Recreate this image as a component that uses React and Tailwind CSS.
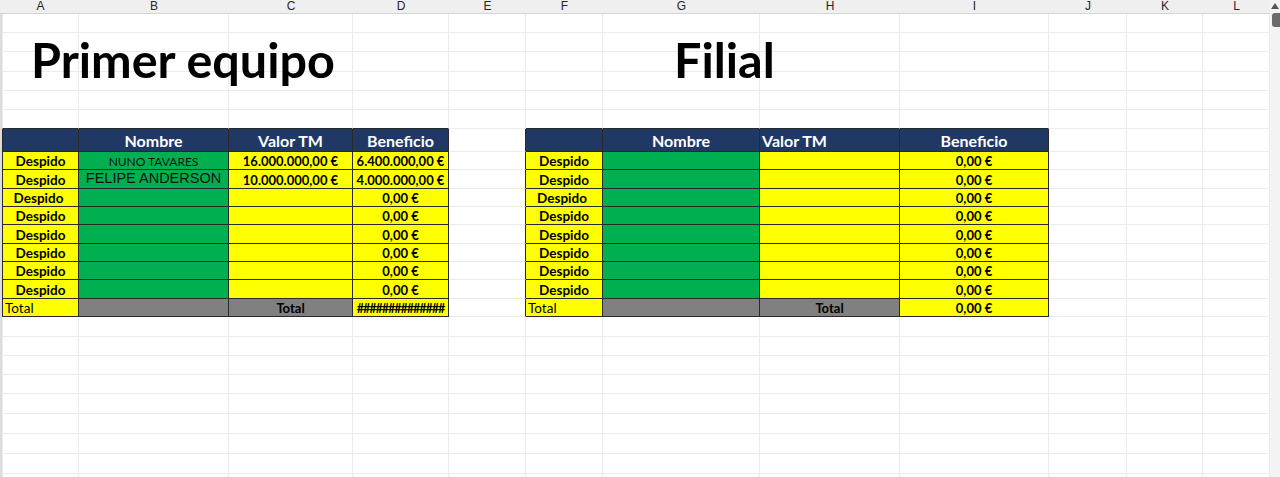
import React from "react";

const COLS = [
  { k: "A", w: 77 },
  { k: "B", w: 150 },
  { k: "C", w: 124 },
  { k: "D", w: 96 },
  { k: "E", w: 77 },
  { k: "F", w: 77 },
  { k: "G", w: 157 },
  { k: "H", w: 140 },
  { k: "I", w: 149 },
  { k: "J", w: 78 },
  { k: "K", w: 76 },
  { k: "L", w: 67 },
];

const calibri = { fontFamily: "Lato, 'Open Sans', sans-serif" };

// the two blocks live in A-D and F-I
const T1 = [0, 1, 2, 3];
const T2 = [5, 6, 7, 8];
const inTable = (i) => T1.includes(i) || T2.includes(i);

const TOP_ROWS = [19, 19, 20, 19, 19, 19];
const DATA_ROWS = [18, 19, 18, 18, 19, 18, 18, 19];
const BOTTOM_ROWS = [20, 19, 19, 19, 20, 20, 20, 20, 10];

const Cell = ({ i, h, tableRow, aboveTable, cell }) => {
  const dark = tableRow && inTable(i);
  const rDark = dark || (tableRow && i === 4);
  const bDark = dark || (aboveTable && inTable(i));
  const lDark = tableRow && i === 0;

  let cls = "flex shrink-0 overflow-hidden whitespace-nowrap border-r border-b ";
  cls += rDark ? "border-r-[#2a2a2a] " : "border-r-[#ebebeb] ";
  cls += bDark ? "border-b-[#2a2a2a] " : "border-b-[#ebebeb] ";
  if (i === 0) cls += lDark ? "border-l border-l-[#2a2a2a] " : "border-l border-l-[#ebebeb] ";
  if (cell) cls += cell.cls || "";

  return (
    <div className={cls} style={{ width: COLS[i].w, height: h }}>
      {cell && cell.text}
    </div>
  );
};

const Row = ({ h, cells = {}, tableRow, aboveTable }) => (
  <div className="flex">
    {COLS.map((c, i) => (
      <Cell key={c.k} i={i} h={h} tableRow={tableRow} aboveTable={aboveTable} cell={cells[i]} />
    ))}
  </div>
);

const yellow = "bg-[#ffff00] ";
const green = "bg-[#00b050] ";
const gray = "bg-[#808080] ";
const navy = "bg-[#203864] ";

const despido = (shift) => ({
  text: "Despido",
  cls: yellow + "items-end justify-center leading-[15px] text-[13.5px] font-bold text-black " + (shift ? "pr-[4px]" : ""),
});
const money = (v) => ({
  text: v,
  cls: yellow + "items-end justify-center leading-[15px] text-[13px] font-bold text-black",
});
const empty = (bg) => ({ text: null, cls: bg });
const head = navy + "items-end pb-[1px] leading-[18px] text-[16px] font-bold text-white ";

function App() {
  const headerCells = {
    0: empty(navy),
    1: { text: "Nombre", cls: head + "justify-center" },
    2: { text: "Valor TM", cls: head + "justify-center" },
    3: { text: "Beneficio", cls: head + "justify-center" },
    5: empty(navy),
    6: { text: "Nombre", cls: head + "justify-center" },
    7: { text: "Valor TM", cls: head + "justify-start pl-[2px]" },
    8: { text: "Beneficio", cls: head + "justify-center" },
  };

  const names = [
    { text: "NUNO TAVARES", cls: green + "items-end justify-center leading-[15px] text-[12px] text-[#111]" },
    {
      text: <span style={{ fontFamily: "'Liberation Sans', Arial, sans-serif" }}>FELIPE ANDERSON</span>,
      cls: green + "items-end justify-center pb-[1px] leading-[17px] text-[14.5px] text-[#111]",
    },
  ];
  const valor = ["16.000.000,00 €", "10.000.000,00 €"];
  const benef = ["6.400.000,00 €", "4.000.000,00 €"];

  const dataRows = DATA_ROWS.map((h, r) => ({
    h,
    cells: {
      0: despido(r === 2),
      1: names[r] || empty(green),
      2: valor[r] ? money(valor[r]) : empty(yellow),
      3: money(benef[r] || "0,00 €"),
      5: despido(r === 2),
      6: empty(green),
      7: empty(yellow),
      8: money("0,00 €"),
    },
  }));

  const totalCells = {
    0: { text: "Total", cls: yellow + "items-end pl-[2px] leading-[15px] text-[13.5px] text-black" },
    1: empty(gray),
    2: { text: "Total", cls: gray + "items-end justify-center leading-[15px] text-[13px] font-bold text-black" },
    3: { text: "##############", cls: yellow + "items-end justify-center leading-[15px] text-[12.5px] font-bold text-black tracking-[-1px]" },
    5: { text: "Total", cls: yellow + "items-end pl-[2px] leading-[15px] text-[13.5px] text-black" },
    6: empty(gray),
    7: { text: "Total", cls: gray + "items-end justify-center leading-[15px] text-[13px] font-bold text-black" },
    8: money("0,00 €"),
  };

  return (
    <div className="flex w-[1280px] h-[477px] overflow-hidden bg-white" style={calibri}>
      <div className="w-[1270px] flex flex-col">
        {/* column letters */}
        <div className="flex h-[14px] shrink-0 bg-[#efefef] border-b border-[#d4d4d4]">
          <div className="w-[2px] shrink-0" />
          {COLS.map((c) => (
            <div
              key={c.k}
              className="shrink-0 flex justify-center items-start text-[12px] leading-[13px] text-[#262626]"
              style={{ width: c.w, fontFamily: "'Liberation Sans', Arial, sans-serif" }}
            >
              {c.k}
            </div>
          ))}
        </div>

        <div className="flex flex-1">
          <div className="w-[2px] shrink-0 bg-[#dcdcdc]" />
          <div className="flex flex-col">
            <div className="relative">
              {TOP_ROWS.map((h, r) => (
                <Row key={r} h={h} aboveTable={r === TOP_ROWS.length - 1} />
              ))}
              <div className="absolute left-[29px] top-[21px] text-[48.5px] leading-none font-bold text-black whitespace-nowrap">
                Primer equipo
              </div>
              <div className="absolute left-[672px] top-[21px] text-[48.5px] leading-none font-bold text-black whitespace-nowrap">
                Filial
              </div>
            </div>

            <Row h={23} tableRow cells={headerCells} />
            {dataRows.map((row, r) => (
              <Row key={r} h={row.h} tableRow cells={row.cells} />
            ))}
            <Row h={18} tableRow cells={totalCells} />

            {BOTTOM_ROWS.map((h, r) => (
              <Row key={r} h={h} />
            ))}
          </div>
        </div>
      </div>

      {/* vertical scrollbar */}
      <div className="w-[10px] shrink-0 flex flex-col items-end bg-[#f3f3f3]">
        <div className="mt-[3px] mr-[1px] w-0 h-0 border-l-[4px] border-r-[4px] border-b-[6px] border-l-transparent border-r-transparent border-b-[#555]" />
        <div className="mt-[4px] w-[8px] h-[14px] rounded-l-[3px] bg-[#6b6b6b]" />
      </div>
    </div>
  );
}

export default App;
